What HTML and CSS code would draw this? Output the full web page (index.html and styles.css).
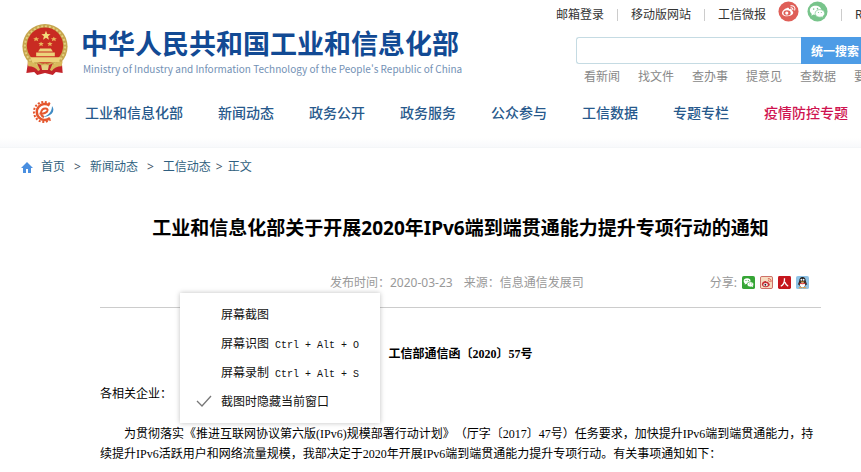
FILE: index.html
```html
<!DOCTYPE html>
<html lang="zh-CN">
<head>
<meta charset="utf-8">
<title>工业和信息化部关于开展2020年IPv6端到端贯通能力提升专项行动的通知</title>
<link rel="stylesheet" href="styles.css">
</head>
<body>
<header class="site-header">
  <div class="masthead">
    <a class="brand" href="#">
      <svg class="emblem" viewBox="0 0 48 54" aria-hidden="true">
        <path d="M7 38l-2 13 8-1 3 3 8-2 8 2 3-3 7 1-1-13z" fill="#c3242a"/>
        <circle cx="24" cy="24" r="23" fill="#c6a64e"/>
        <circle cx="24" cy="24" r="20.500" fill="none" stroke="#e4cf80" stroke-width="2" stroke-dasharray="2 2"/>
        <circle cx="24" cy="23" r="18.500" fill="#c92b22"/>
        <path d="M25 8l1.300 3.200 3.400.2-2.600 2.200.9 3.400-3-1.900-3 1.900.9-3.400-2.600-2.200 3.400-.2z" fill="#f3dc7c"/>
        <path d="M15 14l1 1.500 2 0-1.500 1.200.5 2-2-1.100-2 1.100.5-2-1.500-1.200h2zM33 14l1 1.500h2l-1.500 1.200.5 2-2-1.100-2 1.100.5-2-1.500-1.200h2zM20 19l.8 1.500h2l-1.500 1.200.5 1.900-1.800-1-1.800 1 .5-1.900-1.500-1.200h2zM29 19l.8 1.500h2l-1.500 1.200.5 1.900-1.800-1-1.800 1 .5-1.900-1.500-1.200h2z" fill="#e9b75c"/>
        <path d="M19 26h11l2 3H17zM15 30h19v4H15zM9 35h31l-2 5H11z" fill="#ecd37a"/>
        <path d="M6 39q9 1 12 6l6-4 6 4q3-5 12-6l-1 5q-7 0-10 5l-7-4-7 4q-3-5-10-5z" fill="#d8b95b"/>
        <path d="M16 41l8 4 8-4-3 7H19z" fill="#c3242a"/>
        <path d="M20 43h8l-1 5h-6z" fill="#e4cf80"/>
      </svg>
      <span class="brand-text">
        <span class="brand-cn">中华人民共和国工业和信息化部</span>
        <span class="brand-en">Ministry of Industry and Information Technology of the People's Republic of China</span>
      </span>
    </a>
    <div class="tools">
      <div class="topbar">
        <a href="#">邮箱登录</a><span class="bar"></span>
        <a href="#">移动版网站</a><span class="bar"></span>
        <a href="#">工信微报</a>
        <a class="round" href="#" aria-label="微博">
          <svg viewBox="0 0 22 22"><circle cx="11" cy="11" r="10.500" fill="#df5f58"/><path d="M9 7.500c1.800-.9 3 0 2.500 1.200 2.500-.7 3.500.3 3 1.500 3 1.300 1.400 5.800-4.800 5.800-5.600 0-7-3.500-3.800-6.600C7 8.300 8 7.700 9 7.500z" fill="#fff"/><ellipse cx="9.500" cy="12.500" rx="3.800" ry="2.700" fill="#df5f58"/><circle cx="9.200" cy="12.700" r="1.700" fill="#fff"/><path d="M13.500 5c3-.6 5 1.800 4 4.500M13.500 7.200c1.500-.2 2.400.7 2 2" fill="none" stroke="#fff" stroke-width="1.100" stroke-linecap="round"/></svg>
        </a>
        <a class="round" href="#" aria-label="微信">
          <svg viewBox="0 0 22 22"><circle cx="11" cy="11" r="10.500" fill="#78c48b"/><path d="M9 5c-3.500 0-6 2-6 4.800 0 1.500.8 2.800 2 3.700L4.600 15.400l2.200-1.200c.8.2 1.700.3 2.200.2 4 0 6-2 6-4.600S12.500 5 9 5z" fill="#fff"/><path d="M13.500 9c-3 0-5 1.800-5 4s2 4 5 4c.6 0 1.200-.1 1.700-.3l1.800 1-.4-1.700c1.200-.8 1.900-1.800 1.900-3 0-2.200-2-4-5-4z" fill="#fff" stroke="#78c48b" stroke-width=".7"/><g fill="#78c48b"><circle cx="7" cy="8.500" r=".8"/><circle cx="11" cy="8" r=".8"/><circle cx="12" cy="12" r=".6"/><circle cx="15" cy="12" r=".6"/></g></svg>
        </a>
        <span class="bar"></span>
        <a href="#">RSS</a>
      </div>
      <form class="search">
        <input type="text" aria-label="搜索">
        <button type="button">统一搜索</button>
      </form>
      <div class="quick">
        <a href="#">看新闻</a><a href="#">找文件</a><a href="#">查办事</a><a href="#">提意见</a><a href="#">查数据</a><a href="#">要</a>
      </div>
    </div>
  </div>
  <nav class="nav">
    <svg class="nav-logo" viewBox="0 0 24 22" aria-hidden="true">
      <path d="M17.500 4.500A8 8 0 1 0 18 17" fill="none" stroke="#e4572e" stroke-width="2.600"/>
      <path d="M18 3A10 10 0 1 0 18.500 18.500" fill="none" stroke="#e4572e" stroke-width="2" stroke-dasharray="2 1.600"/>
      <path d="M7.500 12.500c4 .6 7.500-.8 8-3 .4-2-3-3-5-1-2.300 2.300-2 6.500 1.500 7.500" fill="none" stroke="#e4572e" stroke-width="2"/>
      <path d="M20 5c4 5-1 11-9.500 11 5-1 9.500-4.500 9.500-11z" fill="#3f8bc4"/>
    </svg>
    <a href="#">工业和信息化部</a><a href="#">新闻动态</a><a href="#">政务公开</a><a href="#">政务服务</a><a href="#">公众参与</a><a href="#">工信数据</a><a href="#">专题专栏</a><a class="hot" href="#">疫情防控专题</a>
  </nav>
</header>

<main>
  <div class="crumbs">
    <svg viewBox="0 0 12 11" aria-hidden="true"><path d="M6 0L0 6h2v5h3V7h2v4h3V6h2z" fill="#4a8fe0"/></svg>
    <a href="#">首页</a><span>&gt;</span><a href="#">新闻动态</a><span>&gt;</span><a href="#">工信动态</a><span class="last">&gt;</span><a href="#">正文</a>
  </div>
  <article class="article">
    <h1>工业和信息化部关于开展2020年IPv6端到端贯通能力提升专项行动的通知</h1>
    <div class="meta">
      <p class="source"><span>发布时间：2020-03-23</span><span>来源：信息通信发展司</span></p>
      <div class="share">
        <span>分享:</span>
        <a href="#" aria-label="微信"><svg viewBox="0 0 14 14"><rect width="14" height="14" rx="2" fill="#36a536"/><ellipse cx="5.500" cy="5.500" rx="3.700" ry="3" fill="#fff"/><ellipse cx="9" cy="9" rx="3.500" ry="2.800" fill="#fff" stroke="#36a536" stroke-width=".7"/><path d="M3 7l0 2.500 2-1.500zM10 11l1.800 1-.3-2z" fill="#fff"/><g fill="#36a536"><circle cx="4.300" cy="4.800" r=".6"/><circle cx="6.800" cy="4.800" r=".6"/><circle cx="8" cy="8.500" r=".5"/><circle cx="10.200" cy="8.500" r=".5"/></g></svg></a>
        <a href="#" aria-label="微博"><svg viewBox="0 0 14 14"><rect x=".5" y=".5" width="13" height="13" rx="1.500" fill="#f7dcc0" stroke="#c7605a"/><path d="M2 9c0-2 3-4.500 4.500-3.500.5.300.3 1 .3 1 2-.6 2.600 0 2.300 1 3 1 1 4.500-3 4.500C4 12 2 11 2 9z" fill="#c62f35"/><ellipse cx="6" cy="9.300" rx="2.400" ry="1.700" fill="#fff"/><circle cx="5.800" cy="9.400" r="1" fill="#222"/><path d="M8.500 3c2.500-.5 4 1.300 3.200 3.500M8.700 5c1-.1 1.600.5 1.300 1.300" fill="none" stroke="#d5453a" stroke-width="1"/></svg></a>
        <a href="#" aria-label="人人网"><svg viewBox="0 0 14 14"><rect width="14" height="14" rx="1.500" fill="#c5161d"/><path d="M7 2.500c.2 4-1 7-4 8.500M7.300 6.500c.7 2 2 3.600 3.700 4.500" fill="none" stroke="#fff" stroke-width="1.400"/></svg></a>
        <a href="#" aria-label="QQ"><svg viewBox="0 0 14 14"><rect width="14" height="14" rx="2" fill="#8fc3e6"/><path d="M7 1C4.500 1 3.500 3 3.500 5.500L2 9.500l1.500-.3C4 12 5 12.500 7 12.500s3-.5 3.500-3.300l1.500.3-1.500-4C10.500 3 9.500 1 7 1z" fill="#222"/><ellipse cx="7" cy="9.500" rx="2.700" ry="2.800" fill="#fff"/><circle cx="5.800" cy="4" r="1" fill="#fff"/><circle cx="8.200" cy="4" r="1" fill="#fff"/><path d="M4.500 6h5L7 7.300zM3 12h3.500v1.300H3zM7.500 12H11v1.300H7.500z" fill="#f29a2e"/><path d="M3.500 7q3.500 1.800 7 0v1.200q-3.500 1.500-7 0z" fill="#d9342b"/></svg></a>
      </div>
    </div>
    <div class="body">
      <p class="docno">工信部通信函〔2020〕57号</p>
      <p>各相关企业：</p>
      <p class="para">为贯彻落实《推进互联网协议第六版(IPv6)规模部署行动计划》（厅字〔2017〕47号）任务要求，加快提升IPv6端到端贯通能力，持<br>续提升IPv6活跃用户和网络流量规模，我部决定于2020年开展IPv6端到端贯通能力提升专项行动。有关事项通知如下：</p>
    </div>
    <div class="menu" role="menu">
      <button type="button" role="menuitem"><span class="tick"></span><span>屏幕截图</span></button>
      <button type="button" role="menuitem"><span class="tick"></span><span>屏幕识图<kbd>Ctrl + Alt + O</kbd></span></button>
      <button type="button" role="menuitem"><span class="tick"></span><span>屏幕录制<kbd>Ctrl + Alt + S</kbd></span></button>
      <button type="button" role="menuitem"><span class="tick"><svg viewBox="0 0 16 12" aria-hidden="true"><path d="M1 6l5 5L15 1" fill="none" stroke="#777" stroke-width="1.300"/></svg></span><span>截图时隐藏当前窗口</span></button>
    </div>
  </article>
</main>
</body>
</html>
```
FILE: styles.css
```css
* { box-sizing: border-box; }

body {
  margin: 0;
  overflow: hidden;
  background: #fff;
  color: #333;
  font: 12px/16px "Noto Sans", "Noto Sans CJK SC", sans-serif;
  white-space: nowrap;
  text-spacing-trim: space-all;
}

a { color: inherit; text-decoration: none; }
p, h1 { margin: 0; }
svg { display: block; }

.site-header {
  height: 148px;
  border-bottom: 1px solid #f4f6f8;
  background: linear-gradient(#fff 138px, #f8f9fb);
}

.masthead {
  display: flex;
  justify-content: space-between;
  height: 91px;
}

.brand {
  display: flex;
  align-items: flex-start;
  gap: 12px;
  padding: 23px 0 0 21px;
}
.emblem { width: 48px; height: 53px; }
.brand-text { display: flex; flex-direction: column; }
.brand-cn {
  color: #124a94;
  font: 700 27px/40px "Noto Sans CJK SC", sans-serif;
}
.brand-en {
  padding-left: 2px;
  color: #7391b5;
  font: 10px/12px "Noto Sans CJK SC", sans-serif;
}

.tools { width: 305px; overflow: hidden; }
.topbar {
  display: flex;
  align-items: center;
  height: 29px;
}
.topbar a { flex: none; }
.bar {
  flex: none;
  width: 1px;
  height: 12px;
  margin: 0 13px;
  background: #ccc;
}
.round { width: 21px; margin: -6px 0 0 12px; }
.round + .round { margin-left: 8px; }

.search {
  display: flex;
  height: 27px;
  margin: 8px 0 0 20px;
}
.search input {
  flex: none;
  width: 225px;
  border: 1px solid #c5dbe3;
  border-right: 0;
  border-radius: 3px 0 0 3px;
  background: #fff;
}
.search button {
  flex: none;
  width: 68px;
  padding: 0;
  border: 0;
  background: #4d9ce6;
  color: #fff;
  font: 700 12px/24px "Noto Sans CJK SC", sans-serif;
}
.quick {
  display: flex;
  gap: 18px;
  padding: 5px 0 0 28px;
  color: #888;
}
.quick a { flex: none; }

.nav {
  display: flex;
  align-items: center;
  gap: 35px;
  height: 42px;
  padding-left: 32px;
  color: #27598c;
  font: 500 14px/20px "Noto Sans CJK SC", sans-serif;
}
.nav-logo { width: 24px; height: 22px; margin-right: -6px; }
.nav .hot { color: #cf1350; }

.crumbs {
  display: flex;
  align-items: center;
  height: 38px;
  padding-left: 21px;
  color: #2f5f80;
}
.crumbs svg { width: 12px; height: 11px; margin-right: 8px; }
.crumbs span { margin: 0 9px; color: #456; }
.crumbs .last { margin: 0 5px; }

.article {
  position: relative;
  margin: 0 40px 0 100px;
}
.article h1 {
  padding: 28px 0 25px;
  color: #000;
  text-align: center;
  font: 700 19px/28px "Noto Sans", "Noto Sans CJK SC", sans-serif;
}
.meta {
  display: grid;
  grid-template-columns: 1fr auto;
  align-items: center;
  height: 41px;
  padding-bottom: 9px;
  border-bottom: 1px solid #ccc;
  color: #999;
}
.source {
  display: flex;
  gap: 11px;
  padding-left: 230px;
}
.share {
  display: flex;
  align-items: center;
  gap: 5px;
  padding-right: 12px;
}
.share svg { width: 13px; height: 13px; }

.body {
  padding-top: 36px;
  color: #000;
  font: 12px/20px "Liberation Serif", "Noto Sans CJK SC", serif;
}
.docno {
  margin-bottom: 20px;
  text-align: center;
  font-weight: 700;
}
.para {
  margin-top: 20px;
  text-indent: 24px;
}

.menu {
  position: absolute;
  top: 107px;
  left: 80px;
  width: 200px;
  padding: 6px 0 8px;
  background: #fff;
  box-shadow: 0 0 5px rgba(0, 0, 0, 0.25);
}
.menu button {
  display: flex;
  align-items: center;
  width: 100%;
  height: 29px;
  padding: 0 0 0 16px;
  border: 0;
  background: none;
  color: #111;
  font: 12px/16px "Noto Sans CJK SC", sans-serif;
}
.tick { width: 25px; }
.tick svg { width: 16px; height: 12px; }
.menu kbd {
  margin-left: 6px;
  font: 10px/10px "Liberation Mono", monospace;
}
```
